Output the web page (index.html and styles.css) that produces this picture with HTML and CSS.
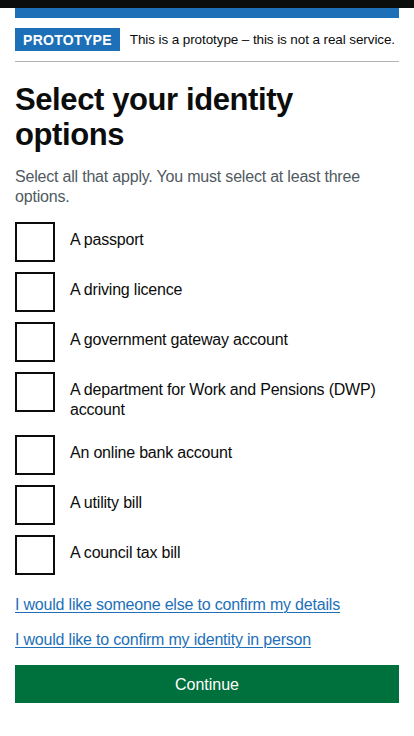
FILE: index.html
```html
<!DOCTYPE html>
<html lang="en">
<head>
<meta charset="utf-8">
<title>Select your identity options</title>
<link rel="stylesheet" href="styles.css">
</head>
<body>
<header class="header"></header>
<div class="header-rule"></div>
<div class="container">
  <div class="phase-banner">
    <strong class="tag">Prototype</strong>
    <span class="phase-text">This is a prototype – this is not a real service.</span>
  </div>
  <main class="main">
    <form class="form">
      <fieldset class="fieldset">
        <legend class="legend"><h1 class="heading">Select your identity options</h1></legend>
        <div class="hint">Select all that apply. You must select at least three options.</div>
        <div class="checkboxes">
          <div class="item"><input class="box" type="checkbox" id="c1"><label class="label" for="c1">A passport</label></div>
          <div class="item"><input class="box" type="checkbox" id="c2"><label class="label" for="c2">A driving licence</label></div>
          <div class="item"><input class="box" type="checkbox" id="c3"><label class="label" for="c3">A government gateway account</label></div>
          <div class="item"><input class="box" type="checkbox" id="c4"><label class="label" for="c4">A department for Work and Pensions (DWP) account</label></div>
          <div class="item"><input class="box" type="checkbox" id="c5"><label class="label" for="c5">An online bank account</label></div>
          <div class="item"><input class="box" type="checkbox" id="c6"><label class="label" for="c6">A utility bill</label></div>
          <div class="item"><input class="box" type="checkbox" id="c7"><label class="label" for="c7">A council tax bill</label></div>
        </div>
      </fieldset>
      <p class="para"><a class="link" href="#">I would like someone else to confirm my details</a></p>
      <p class="para"><a class="link" href="#">I would like to confirm my identity in person</a></p>
      <button class="button" type="button">Continue</button>
    </form>
  </main>
</div>
</body>
</html>
```
FILE: styles.css
```css
* { box-sizing: border-box; }
html, body {
  margin: 0;
  padding: 0;
  background: #ffffff;
  color: #0b0c0c;
  font-family: "Liberation Sans", Arial, sans-serif;
}
.header {
  height: 8px;
  background: #0b0c0c;
}
.header-rule {
  height: 10px;
  margin: 0 15px;
  background: #1d70b8;
}
.container {
  margin: 0 15px;
}
.phase-banner {
  display: flex;
  align-items: center;
  padding: 10px 0;
  border-bottom: 1px solid #b1b4b6;
}
.tag {
  display: inline-block;
  flex: 0 0 auto;
  padding: 4px 8px 3px;
  margin-right: 10px;
  background: #1d70b8;
  color: #ffffff;
  font-weight: 700;
  font-size: 14px;
  line-height: 16px;
  letter-spacing: 0.3px;
  text-transform: uppercase;
}
.phase-text {
  font-size: 13.5px;
  line-height: 16px;
  letter-spacing: -0.1px;
  white-space: nowrap;
}
.main {
  padding-top: 20px;
}
.fieldset {
  margin: 0 0 20px;
  padding: 0;
  border: 0;
  min-width: 0;
}
.legend {
  padding: 0;
  margin: 0 0 15px;
}
.heading {
  margin: 0;
  font-size: 31px;
  line-height: 35px;
  font-weight: 700;
  letter-spacing: -0.4px;
}
.hint {
  margin-bottom: 15px;
  color: #505a5f;
  font-size: 16px;
  line-height: 20px;
  letter-spacing: -0.2px;
}
.checkboxes {
  display: flex;
  flex-direction: column;
  gap: 10px;
}
.item {
  display: flex;
  align-items: flex-start;
  min-height: 40px;
}
.box {
  appearance: none;
  -webkit-appearance: none;
  flex: 0 0 40px;
  width: 40px;
  height: 40px;
  margin: 0;
  border: 2px solid #0b0c0c;
  border-radius: 0;
  background: #ffffff;
}
.label {
  padding: 8px 15px 5px;
  font-size: 16px;
  line-height: 20px;
  letter-spacing: -0.2px;
}
.para {
  margin: 0 0 15px;
  font-size: 16px;
  line-height: 20px;
  letter-spacing: -0.2px;
}
.link {
  color: #1d70b8;
  text-decoration: underline;
  text-decoration-thickness: 1px;
  text-underline-offset: 0.1em;
}
.button {
  display: block;
  width: 100%;
  margin: 0;
  padding: 8px 10px 7px;
  border: 2px solid transparent;
  border-radius: 0;
  background: #00703c;
  box-shadow: 0 2px 0 #002d18;
  color: #ffffff;
  font-family: "Liberation Sans", Arial, sans-serif;
  font-size: 16px;
  line-height: 19px;
  text-align: center;
}
```
